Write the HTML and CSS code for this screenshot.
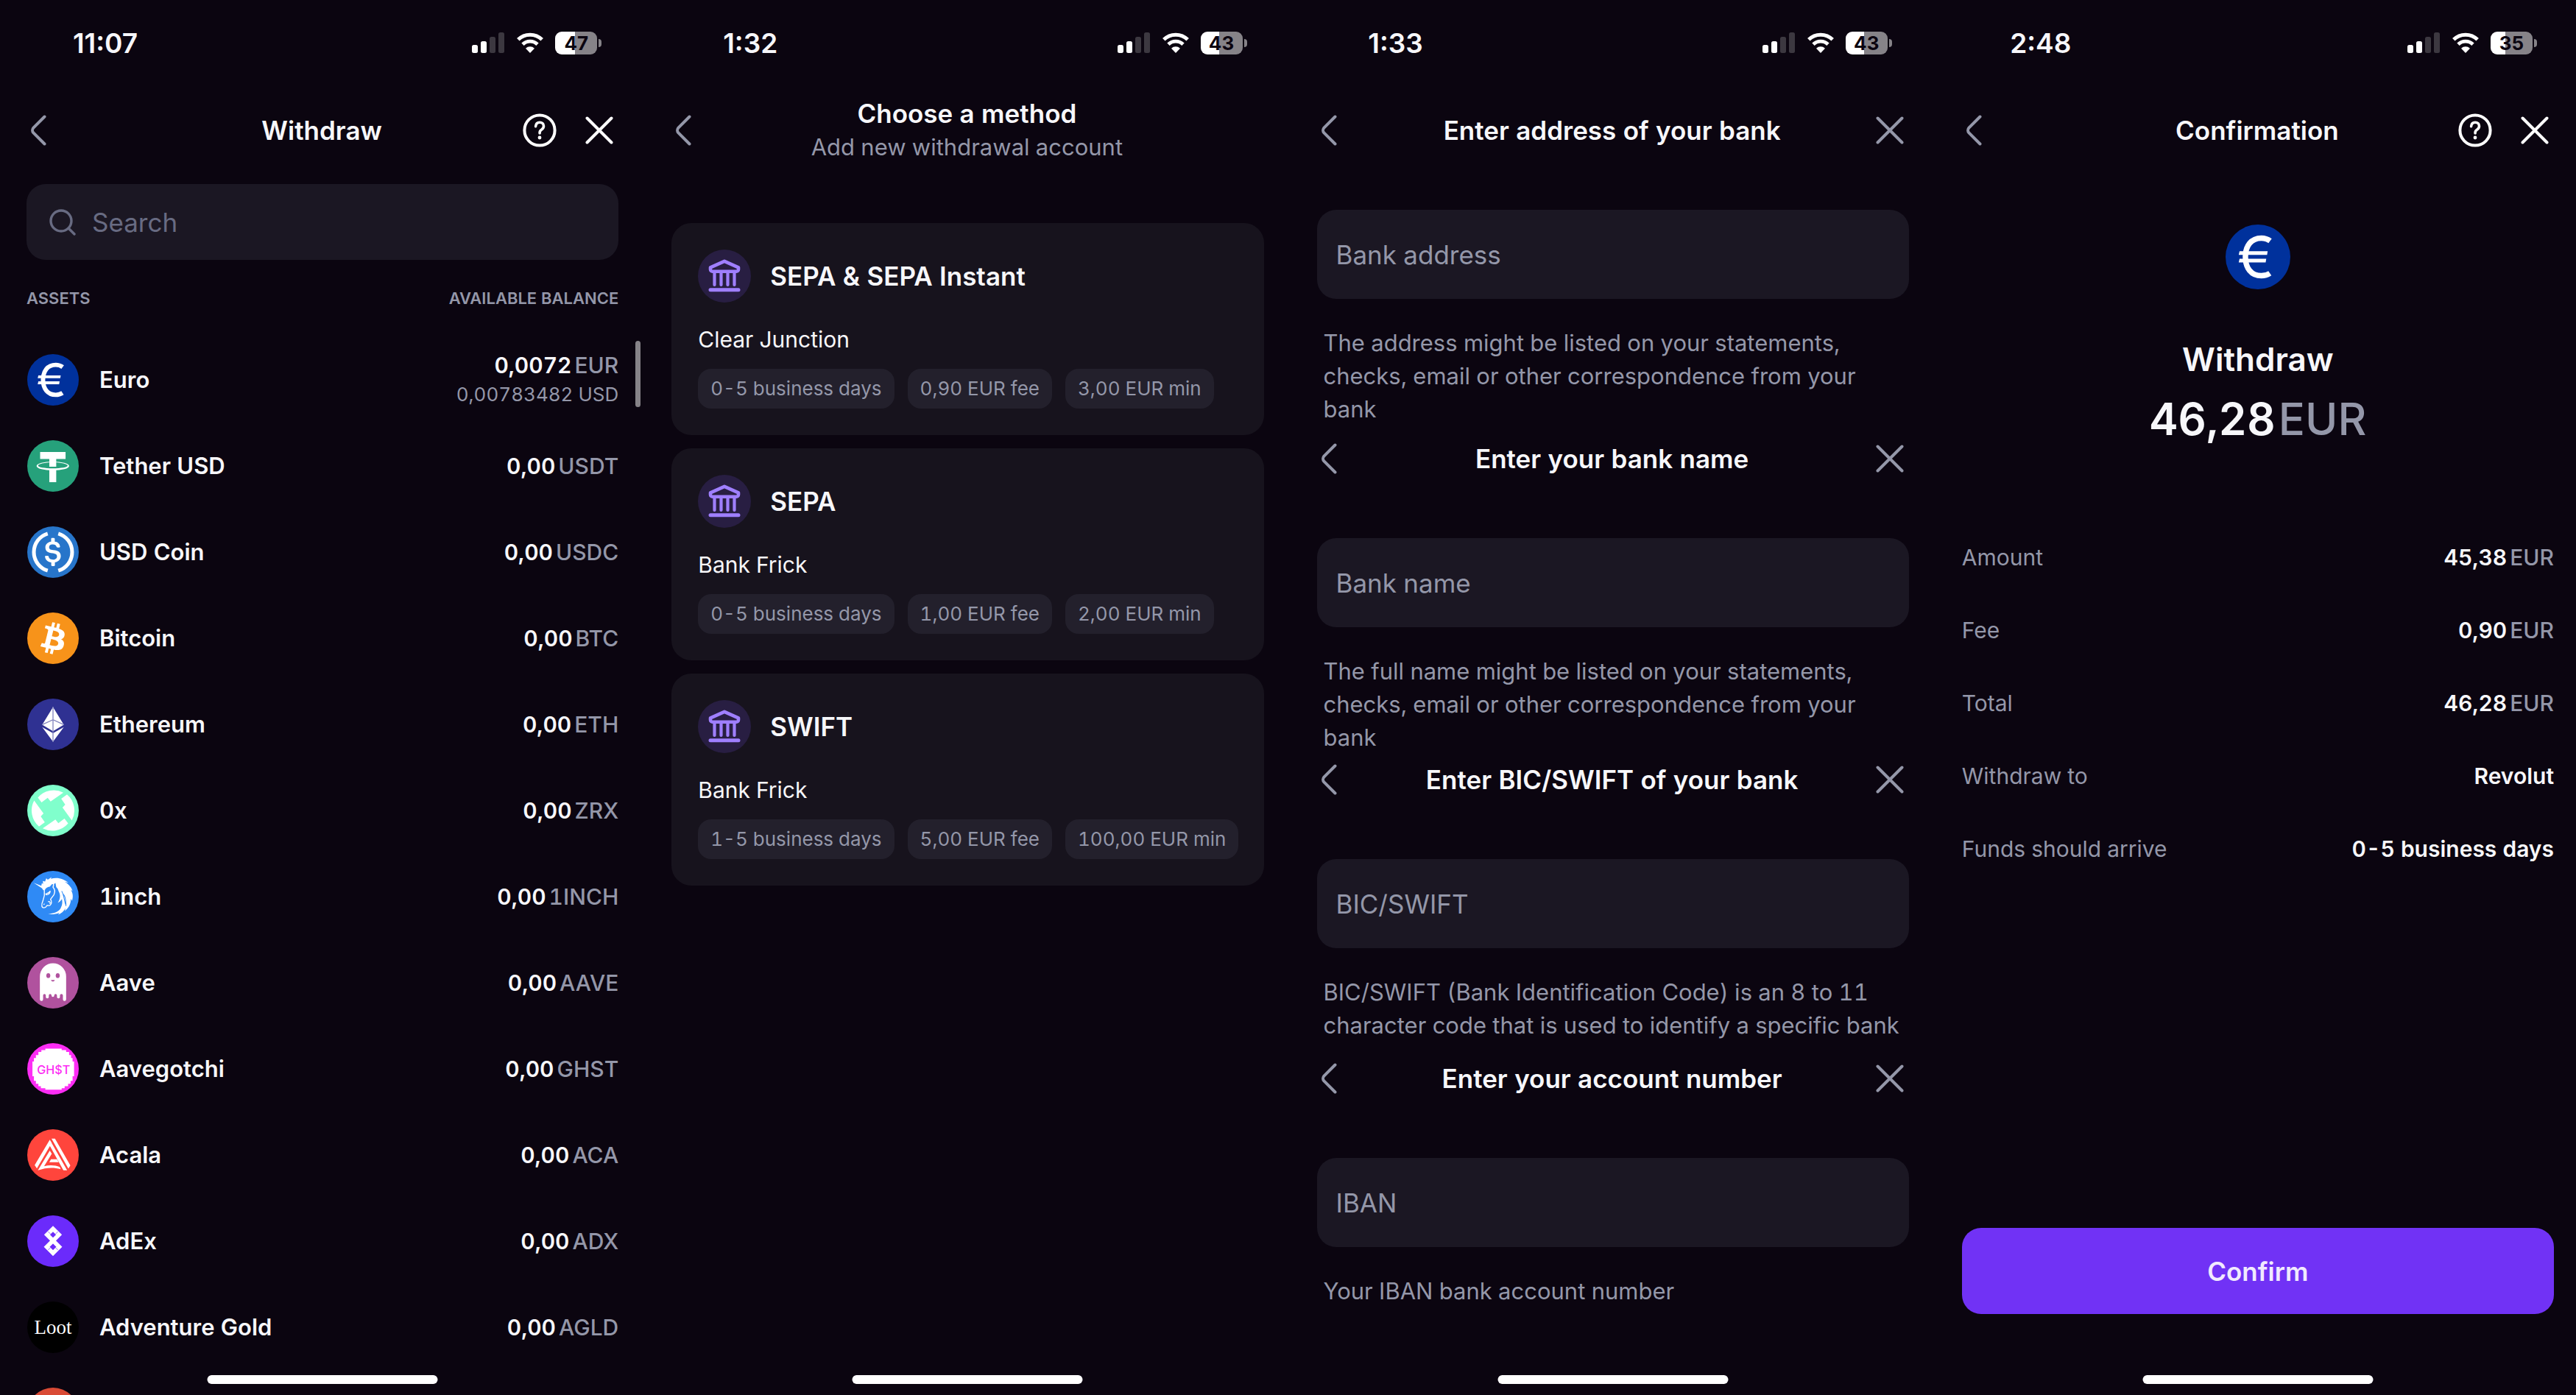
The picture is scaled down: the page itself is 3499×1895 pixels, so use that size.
FILE: index.html
```
<!DOCTYPE html>
<html lang="en">
  <head>
    <meta charset="UTF-8" />
    <meta name="viewport" content="width=device-width, initial-scale=1.0" />
    <title>Withdraw flow</title>
    <link rel="stylesheet" href="styles.css">
  </head>
  <body>
    <!-- shared icons -->
    <svg class="sprite" aria-hidden="true">
      <symbol id="i-back" viewBox="0 0 22 42">
        <path d="M19.5 2.5 4.4 17.6a5 5 0 0 0 0 6.8L19.5 39.5" fill="none" stroke="currentColor" stroke-width="4" stroke-linecap="round" />
      </symbol>
      <symbol id="i-close" viewBox="0 0 38 38">
        <path d="M2.5 2.5l33 33M35.5 2.5l-33 33" fill="none" stroke="currentColor" stroke-width="4" stroke-linecap="round" />
      </symbol>
      <symbol id="i-help" viewBox="0 0 46 46">
        <circle cx="23" cy="23" r="20.6" fill="none" stroke="currentColor" stroke-width="4" />
        <path d="M17.6 17.6c.3-3.3 2.5-5.3 5.5-5.3 3.2 0 5.400 2 5.400 4.900 0 2.200-1 3.500-2.800 4.700-1.900 1.200-2.600 2.200-2.600 4v1" fill="none" stroke="currentColor" stroke-width="3.6" stroke-linecap="round" />
        <circle cx="23" cy="33" r="2.4" fill="currentColor" />
      </symbol>
      <symbol id="i-search" viewBox="0 0 36 36">
        <circle cx="16" cy="16" r="14" fill="none" stroke="currentColor" stroke-width="3.4" />
        <path d="M26 26l8 8" stroke="currentColor" stroke-width="3.4" stroke-linecap="round" />
      </symbol>
      <symbol id="i-signal" viewBox="0 0 45 28">
        <rect y="17" width="8" height="11" rx="2.5" fill="#fff" />
        <rect x="12" y="12" width="8" height="16" rx="2.5" fill="#fff" />
        <rect x="24" y="6" width="8" height="22" rx="2.5" fill="#3c3840" />
        <rect x="36" width="8" height="28" rx="2.5" fill="#3c3840" />
      </symbol>
      <symbol id="i-wifi" viewBox="0 0 38 28">
        <path d="M2.8 9.8a23 23 0 0 1 32.4 0" fill="none" stroke="#fff" stroke-width="5" />
        <path d="M9 16.2a14.2 14.2 0 0 1 20 0" fill="none" stroke="#fff" stroke-width="4.8" />
        <path d="M19 28l-6-6.2a8.6 8.6 0 0 1 12 0z" fill="#fff" />
      </symbol>
      <symbol id="i-bank" viewBox="0 0 72 72">
        <path d="M17 24.3L36 15.8l19 8.5v2.7a2.8 2.8 0 0 1-2.8 2.8H19.8A2.8 2.8 0 0 1 17 27z" fill="none" stroke="#9f7fff" stroke-width="4.6" stroke-linejoin="round" />
        <path d="M22.5 31v17M31.5 31v17M40.5 31v17M49.5 31v17" stroke="#9f7fff" stroke-width="4.2" stroke-linecap="round" />
        <path d="M17 54.7h38" stroke="#9f7fff" stroke-width="5" stroke-linecap="round" />
      </symbol>
      <symbol id="c-eur" viewBox="0 0 32 32">
        <circle cx="16" cy="16" r="16" fill="#00319c" />
        <path d="M22 8.1c-1.2-.9-2.6-1.4-4.3-1.4-5.1 0-7.9 3.9-7.9 9.3s2.8 9.3 7.9 9.3c1.7 0 3-.4 4.2-1.2" fill="none" stroke="#fff" stroke-width="2.7" />
        <path d="M6.9 13.2h13.9l-.3 1.8H6.5zM6.9 16.9h13.2l-.3 1.8H6.5z" fill="#fff" />
      </symbol>
    </svg>

    <main class="board">
      <!-- asset list -->
      <section class="phone">
        <div class="status">
          <time>11:07</time>
          <div class="status-icons">
            <svg class="signal"><use href="#i-signal" /></svg>
            <svg class="wifi"><use href="#i-wifi" /></svg>
            <span class="battery" style="--level: 47%">47</span>
          </div>
        </div>
        <header class="nav">
          <button class="nav-back" aria-label="Back"><svg><use href="#i-back" /></svg></button>
          <h2>Withdraw</h2>
          <div class="nav-actions">
            <button class="help light" aria-label="Help"><svg><use href="#i-help" /></svg></button>
            <button class="close light" aria-label="Close"><svg><use href="#i-close" /></svg></button>
          </div>
        </header>

        <label class="search">
          <svg><use href="#i-search" /></svg>
          <input type="search" placeholder="Search" aria-label="Search" />
        </label>

        <div class="asset-list">
          <table class="assets">
            <thead>
              <tr><th>ASSETS</th><th>AVAILABLE BALANCE</th></tr>
            </thead>
            <tbody>
              <tr>
                <td><div class="asset"><svg class="coin"><use href="#c-eur" /></svg>Euro</div></td>
                <td><b>0,0072</b><i>EUR</i><small>0,00783482 USD</small></td>
              </tr>
              <tr>
                <td><div class="asset">
                  <svg class="coin" viewBox="0 0 32 32">
                    <circle cx="16" cy="16" r="16" fill="#26a17b" />
                    <path d="M8 7.3h15.8v4.3H18v4.9h-4.3v-4.9H8zM13.7 18h4.3v8h-4.3z" fill="#fff" />
                    <path fill-rule="evenodd" d="M5.8 16a10.1 2.8 0 0 1 20.2 0 10.1 2.8 0 0 1-20.2 0zM6.7 15.8c0 1 4 1.7 9.2 1.7s9.2-.7 9.2-1.7-4-2.1-9.2-2.1-9.2 1.1-9.2 2.1z" fill="#fff" />
                  </svg>Tether USD</div></td>
                <td><b>0,00</b><i>USDT</i></td>
              </tr>
              <tr>
                <td><div class="asset">
                  <svg class="coin" viewBox="0 0 32 32">
                    <circle cx="16" cy="16" r="16" fill="#2775ca" />
                    <path d="M12.7 4.5a12 12 0 0 0 0 23M19.3 4.5a12 12 0 0 1 0 23" fill="none" stroke="#fff" stroke-width="2.3" />
                    <path transform="translate(-3.2 -3.2) scale(1.2)" d="M20.022 18.124c0-2.124-1.28-2.852-3.84-3.156-1.828-.243-2.193-.728-2.193-1.578 0-.85.61-1.396 1.828-1.396 1.097 0 1.707.364 2.011 1.275a.458.458 0 00.427.303h.975a.416.416 0 00.427-.425v-.06a3.04 3.04 0 00-2.743-2.489V9.142c0-.243-.183-.425-.487-.486h-.915c-.243 0-.426.182-.487.486v1.396c-1.829.242-2.986 1.456-2.986 2.974 0 2.002 1.218 2.791 3.778 3.095 1.707.303 2.255.668 2.255 1.639 0 .97-.853 1.638-2.011 1.638-1.585 0-2.133-.667-2.316-1.578-.06-.242-.244-.364-.427-.364h-1.036a.416.416 0 00-.426.425v.06c.243 1.518 1.219 2.61 3.23 2.914v1.457c0 .242.183.425.487.485h.915c.243 0 .426-.182.487-.485V21.34c1.829-.303 3.047-1.578 3.047-3.217z" fill="#fff" />
                  </svg>USD Coin</div></td>
                <td><b>0,00</b><i>USDC</i></td>
              </tr>
              <tr>
                <td><div class="asset">
                  <svg class="coin" viewBox="0 0 32 32">
                    <circle cx="16" cy="16" r="16" fill="#f7931a" />
                    <path d="M23.189 14.02c.314-2.096-1.283-3.223-3.465-3.975l.708-2.84-1.728-.43-.69 2.765c-.454-.114-.92-.22-1.385-.326l.695-2.783L15.596 6l-.708 2.839c-.376-.086-.746-.17-1.104-.26l.002-.009-2.384-.595-.46 1.846s1.283.294 1.256.312c.7.175.826.638.805 1.006l-.806 3.235c.048.012.11.03.18.057l-.183-.045-1.13 4.532c-.086.212-.303.531-.793.41.018.025-1.256-.313-1.256-.313l-.858 1.978 2.25.561c.418.105.828.215 1.231.318l-.715 2.872 1.727.43.708-2.84c.472.127.93.245 1.378.357l-.706 2.828 1.728.43.715-2.866c2.948.558 5.164.333 6.097-2.333.752-2.146-.037-3.385-1.588-4.192 1.13-.26 1.98-1.003 2.207-2.538zm-3.95 5.538c-.533 2.147-4.148.986-5.32.695l.95-3.805c1.172.293 4.929.872 4.37 3.11zm.535-5.569c-.487 1.953-3.495.96-4.47.717l.86-3.45c.975.243 4.118.696 3.61 2.733z" fill="#fff" />
                  </svg>Bitcoin</div></td>
                <td><b>0,00</b><i>BTC</i></td>
              </tr>
              <tr>
                <td><div class="asset">
                  <svg class="coin" viewBox="0 0 32 32">
                    <circle cx="16" cy="16" r="16" fill="#2f3192" />
                    <path d="M16 5.2l6.7 11L16 20.2l-6.7-4zM9.3 17.7L16 21.5l6.7-3.8L16 26.7z" fill="#fff" />
                    <path d="M9.3 16.2L16 13.1l6.7 3.1M16 5v22" fill="none" stroke="#8284be" stroke-width=".6" />
                  </svg>Ethereum</div></td>
                <td><b>0,00</b><i>ETH</i></td>
              </tr>
              <tr>
                <td><div class="asset">
                  <svg class="coin" viewBox="0 0 32 32">
                    <circle cx="16" cy="16" r="16" fill="#80ffcc" />
                    <g fill="#fff">
                      <path d="M6.6 8l2.3 3 3.8-2.9 1.8 2.3 7.9-5.5A13 13 0 0 0 6.6 8zM24.7 6.1a13 13 0 0 1 3 16.1l-5.8-8 1.7-1.9-2.5-3.6z" />
                      <path transform="rotate(180 16 16)" d="M6.6 8l2.3 3 3.8-2.9 1.8 2.3 7.9-5.5A13 13 0 0 0 6.6 8zM24.7 6.1a13 13 0 0 1 3 16.1l-5.8-8 1.7-1.9-2.5-3.6z" />
                    </g>
                  </svg>0x</div></td>
                <td><b>0,00</b><i>ZRX</i></td>
              </tr>
              <tr>
                <td><div class="asset">
                  <svg class="coin" viewBox="52 426 208 208">
                    <circle cx="156" cy="530" r="104" fill="#2f8af5" />
                    <path d="M78 474l40 16 2 12z" fill="#fff" />
                    <path d="M108 490l3-14 5 3-1-12 9 2 5-13 6 6 15-11-3 7c28-8 52 0 71 16l-15-4c20 12 30 28 32 38l-7-6c10 18 9 30 5 45l-5-8c0 24-11 38-24 49l2-11c-8 15-18 21-29 26l4-8c-15 6-30 8-45 5 22-2 41-8 50-22 9-15 8-27 6-38-5 8-10 12-17 15 11-16 12-32 4-46-2-8-5-14-10-18l-3-16c-6 2-8 7-10 12-9-4-18 0-24 10l-15 8z" fill="#fff" />
                    <path d="M191 508c10 16 10 40 18 60M197 520c14 14 8 30 12 42" fill="none" stroke="#2f8af5" stroke-width="3" />
                    <path d="M121 503c4-9 12-14 21-15l14-16c3 9 3 15 0 20 8 8 8 20 4 30l-14 19c6 7 5 18-2 24-6 4-11-3-14 3-4 9-18 10-19 0-1-7 1-14 4-20l6-22z" fill="#2f8af5" stroke="#fff" stroke-width="4" stroke-linejoin="round" />
                    <path d="M125 520c8-4 14-4 20-13-1 10-8 16-18 16M136 551c6-4 11 2 7 8M118 562l4-3" fill="none" stroke="#fff" stroke-width="4" />
                  </svg>1inch</div></td>
                <td><b>0,00</b><i>1INCH</i></td>
              </tr>
              <tr>
                <td><div class="asset">
                  <svg class="coin" viewBox="52 777 208 208">
                    <circle cx="156" cy="881" r="104" fill="#b0529e" />
                    <path d="M103 855a53 53 0 0 1 106 0v93a6.5 6.5 0 0 1-13 0v-16c0-8-12-8-12 0v6a6 6 0 0 1-12 0v-6c0-8-11-8-11 0a5.5 6 0 0 1-11 0c0-8-11-8-11 0v6a6 6 0 0 1-12 0v-6c0-8-11-8-11 0v16a6.5 6.5 0 0 1-13 0z" fill="#fff" />
                    <g fill="#b0529e"><ellipse cx="137" cy="852" rx="8" ry="10" /><ellipse cx="175" cy="852" rx="8" ry="10" /><path d="M148 870h15c-2 8-13 8-15 0z" /></g>
                  </svg>Aave</div></td>
                <td><b>0,00</b><i>AAVE</i></td>
              </tr>
              <tr>
                <td><div class="asset">
                  <svg class="coin" viewBox="52 1128 208 208">
                    <circle cx="156" cy="1232" r="104" fill="#fc2df4" />
                    <path d="M125 1150h66v6h18v8h12v12h8v12h6v14h6v60h-6v18h-8v12h-10v10h-14v8h-12v6h-66v-6h-18v-8h-10v-10h-10v-12h-8v-18h-6v-60h6v-14h8v-12h10v-12h12v-8h16z" fill="#fff" />
                    <text x="158" y="1254" class="mark-ghst">GH$T</text>
                  </svg>Aavegotchi</div></td>
                <td><b>0,00</b><i>GHST</i></td>
              </tr>
              <tr>
                <td><div class="asset">
                  <svg class="coin" viewBox="52 98 208 208">
                    <circle cx="156" cy="202" r="104" fill="#ff453c" />
                    <g fill="#fff">
                      <path d="M143 140l8 13-60 103-9-13zM143 140l70 124h-15l-61-110zM150 136h14l62 108-8 13z" />
                      <path d="M143 184l8 13-31 50c22-6 46-4 63 3l4 9c-30-8-60-6-92 5zM148 219h24l7 12h-38z" />
                    </g>
                  </svg>Acala</div></td>
                <td><b>0,00</b><i>ACA</i></td>
              </tr>
              <tr>
                <td><div class="asset">
                  <svg class="coin" viewBox="52 450 208 208">
                    <circle cx="156" cy="554" r="104" fill="#6b2bfb" />
                    <path d="M156 504l24 24-49 49 25 25 25-25-49-49z" fill="none" stroke="#fff" stroke-width="17" />
                    <path d="M136 515l10 10M176 515l-10 10M136 590l10-10M176 590l-10-10" stroke="#6b2bfb" stroke-width="2" />
                  </svg>AdEx</div></td>
                <td><b>0,00</b><i>ADX</i></td>
              </tr>
              <tr>
                <td><div class="asset">
                  <svg class="coin" viewBox="52 800 208 208">
                    <circle cx="156" cy="904" r="104" fill="#000" />
                    <text x="156" y="932" class="mark-loot">Loot</text>
                  </svg>Adventure Gold</div></td>
                <td><b>0,00</b><i>AGLD</i></td>
              </tr>
              <tr>
                <td><div class="asset">
                  <svg class="coin" viewBox="0 0 32 32">
                    <circle cx="16" cy="16" r="16" fill="#d94a35" />
                    <path d="M12 5h8v2h-8z" fill="#eeb0a6" />
                  </svg></div></td>
                <td></td>
              </tr>
            </tbody>
          </table>
          <span class="scroll-thumb"></span>
        </div>
        <span class="home-bar"></span>
      </section>

      <!-- withdrawal method -->
      <section class="phone">
        <div class="status">
          <time>1:32</time>
          <div class="status-icons">
            <svg class="signal"><use href="#i-signal" /></svg>
            <svg class="wifi"><use href="#i-wifi" /></svg>
            <span class="battery" style="--level: 43%">43</span>
          </div>
        </div>
        <header class="nav">
          <button class="nav-back" aria-label="Back"><svg><use href="#i-back" /></svg></button>
          <div>
            <h2>Choose a method</h2>
            <p>Add new withdrawal account</p>
          </div>
        </header>
        <div class="methods">
          <article class="card">
            <h3><svg><use href="#i-bank" /></svg>SEPA &amp; SEPA Instant</h3>
            <p>Clear Junction</p>
            <ul><li>0-5 business days</li><li>0,90 EUR fee</li><li>3,00 EUR min</li></ul>
          </article>
          <article class="card">
            <h3><svg><use href="#i-bank" /></svg>SEPA</h3>
            <p>Bank Frick</p>
            <ul><li>0-5 business days</li><li>1,00 EUR fee</li><li>2,00 EUR min</li></ul>
          </article>
          <article class="card">
            <h3><svg><use href="#i-bank" /></svg>SWIFT</h3>
            <p>Bank Frick</p>
            <ul><li>1-5 business days</li><li>5,00 EUR fee</li><li>100,00 EUR min</li></ul>
          </article>
        </div>
        <span class="home-bar"></span>
      </section>

      <!-- bank details -->
      <section class="phone">
        <div class="status">
          <time>1:33</time>
          <div class="status-icons">
            <svg class="signal"><use href="#i-signal" /></svg>
            <svg class="wifi"><use href="#i-wifi" /></svg>
            <span class="battery" style="--level: 43%">43</span>
          </div>
        </div>
        <form class="steps">
          <div class="step">
            <header class="nav">
              <button type="button" class="nav-back" aria-label="Back"><svg><use href="#i-back" /></svg></button>
              <h2><label for="address">Enter address of your bank</label></h2>
              <div class="nav-actions"><button type="button" class="close" aria-label="Close"><svg><use href="#i-close" /></svg></button></div>
            </header>
            <input id="address" type="text" placeholder="Bank address" />
            <p>The address might be listed on your statements, checks, email or other correspondence from your bank</p>
          </div>
          <div class="step">
            <header class="nav">
              <button type="button" class="nav-back" aria-label="Back"><svg><use href="#i-back" /></svg></button>
              <h2><label for="bank">Enter your bank name</label></h2>
              <div class="nav-actions"><button type="button" class="close" aria-label="Close"><svg><use href="#i-close" /></svg></button></div>
            </header>
            <input id="bank" type="text" placeholder="Bank name" />
            <p>The full name might be listed on your statements, checks, email or other correspondence from your bank</p>
          </div>
          <div class="step">
            <header class="nav">
              <button type="button" class="nav-back" aria-label="Back"><svg><use href="#i-back" /></svg></button>
              <h2><label for="bic">Enter BIC/SWIFT of your bank</label></h2>
              <div class="nav-actions"><button type="button" class="close" aria-label="Close"><svg><use href="#i-close" /></svg></button></div>
            </header>
            <input id="bic" type="text" placeholder="BIC/SWIFT" />
            <p>BIC/SWIFT (Bank Identification Code) is an 8 to 11 character code that is used to identify a specific bank</p>
          </div>
          <div class="step">
            <header class="nav">
              <button type="button" class="nav-back" aria-label="Back"><svg><use href="#i-back" /></svg></button>
              <h2><label for="iban">Enter your account number</label></h2>
              <div class="nav-actions"><button type="button" class="close" aria-label="Close"><svg><use href="#i-close" /></svg></button></div>
            </header>
            <input id="iban" type="text" placeholder="IBAN" />
            <p>Your IBAN bank account number</p>
          </div>
        </form>
        <span class="home-bar"></span>
      </section>

      <!-- confirmation -->
      <section class="phone">
        <div class="status">
          <time>2:48</time>
          <div class="status-icons">
            <svg class="signal"><use href="#i-signal" /></svg>
            <svg class="wifi"><use href="#i-wifi" /></svg>
            <span class="battery" style="--level: 35%">35</span>
          </div>
        </div>
        <header class="nav">
          <button class="nav-back" aria-label="Back"><svg><use href="#i-back" /></svg></button>
          <h2>Confirmation</h2>
          <div class="nav-actions">
            <button class="help light" aria-label="Help"><svg><use href="#i-help" /></svg></button>
            <button class="close light" aria-label="Close"><svg><use href="#i-close" /></svg></button>
          </div>
        </header>
        <div class="summary">
          <svg><use href="#c-eur" /></svg>
          <h3>Withdraw</h3>
          <p><b>46,28</b><i>EUR</i></p>
        </div>
        <dl class="details">
          <div><dt>Amount</dt><dd>45,38<i>EUR</i></dd></div>
          <div><dt>Fee</dt><dd>0,90<i>EUR</i></dd></div>
          <div><dt>Total</dt><dd>46,28<i>EUR</i></dd></div>
          <div><dt>Withdraw to</dt><dd>Revolut</dd></div>
          <div><dt>Funds should arrive</dt><dd>0-5 business days</dd></div>
        </dl>
        <button class="confirm">Confirm</button>
        <span class="home-bar"></span>
      </section>
    </main>
  </body>
</html>
```
FILE: styles.css
```
* {
  box-sizing: border-box;
  margin: 0;
  padding: 0;
}

:root {
  --bg: #0b0510;
  --card: #17131d;
  --field: #1b1723;
  --chip: #23202c;
  --text: #f7f7fa;
  --muted: #9497a9;
  --dim: #686b82;
}

body {
  background: var(--bg);
  color: var(--text);
  font-family: Inter, sans-serif;
  font-size: 31px;
  font-variant-numeric: tabular-nums;
  overflow: hidden;
}

button {
  background: none;
  border: none;
  color: inherit;
  font: inherit;
  cursor: pointer;
}

svg {
  display: block;
  flex: none;
}

i {
  margin-left: 4px;
  font-style: normal;
  color: var(--muted);
}

.sprite {
  position: absolute;
  width: 0;
  height: 0;
}

/* four screens side by side, the last one runs slightly past the edge */
.board {
  display: grid;
  grid-template-columns: repeat(4, 1fr);
  width: calc(100% + 6px);
  height: 100vh;
}

.phone {
  position: relative;
  display: flex;
  flex-direction: column;
  min-width: 0;
  min-height: 0;
  padding: 0 36px;
  overflow: hidden;
}

/* status bar */
.status {
  display: flex;
  flex: none;
  align-items: center;
  justify-content: space-between;
  height: 116px;
  margin-bottom: 26px;
  padding: 0 23px 0 32px;
}

.status time {
  width: 150px;
  text-align: center;
  font-size: 37px;
  font-weight: 600;
  font-variant-numeric: normal;
}

.status-icons {
  display: flex;
  align-items: center;
  gap: 15px;
}

.signal {
  width: 45px;
  height: 28px;
}

.wifi {
  width: 38px;
  height: 28px;
}

.battery {
  position: relative;
  width: 57px;
  height: 31px;
  margin-right: 6px;
  border-radius: 9px;
  background: linear-gradient(to right, #fff var(--level), #868388 var(--level));
  color: var(--bg);
  font-size: 26px;
  font-weight: 700;
  font-variant-numeric: normal;
  line-height: 31px;
  text-align: center;
}

.battery::after {
  content: "";
  position: absolute;
  right: -6px;
  top: 10px;
  width: 4px;
  height: 11px;
  border-radius: 0 4px 4px 0;
  background: #868388;
}

/* screen title */
.nav {
  display: grid;
  flex: none;
  grid-template-columns: 1fr auto 1fr;
  align-content: center;
  align-items: center;
  height: 70px;
  padding: 0 7px 0 5px;
  text-align: center;
}

.nav h2 {
  font-size: 35px;
  font-weight: 600;
  line-height: 45px;
}

.nav p {
  color: var(--muted);
  line-height: 45px;
}

.nav-back,
.close {
  color: var(--muted);
}

.nav-back {
  justify-self: start;
}

.nav-back svg {
  width: 22px;
  height: 42px;
}

.nav-actions {
  display: flex;
  align-items: center;
  justify-content: flex-end;
  gap: 39px;
}

.help svg {
  width: 46px;
  height: 46px;
}

.close svg {
  width: 38px;
  height: 38px;
}

.light {
  color: #fff;
}

/* search */
.search {
  display: flex;
  flex: none;
  align-items: center;
  gap: 22px;
  height: 103px;
  margin: 38px 0;
  padding: 0 31px;
  border-radius: 26px;
  background: var(--field);
  color: var(--dim);
}

.search svg {
  width: 36px;
  height: 36px;
}

input {
  width: 100%;
  border: none;
  outline: none;
  background: none;
  color: var(--text);
  font: inherit;
  font-size: 35px;
}

.search input::placeholder {
  color: var(--dim);
}

/* assets */
.asset-list {
  flex: 1;
  min-height: 0;
}

.assets {
  width: 100%;
  border-collapse: collapse;
}

.assets th {
  height: 66px;
  padding-bottom: 38px;
  color: var(--muted);
  font-size: 22px;
  font-weight: 600;
  line-height: 28px;
  text-align: left;
}

.assets td {
  height: 117px;
  font-weight: 600;
}

.assets th:last-child,
.assets td:last-child {
  text-align: right;
}

.assets b,
.assets i {
  font-size: 30px;
  line-height: 40px;
}

.assets b {
  font-weight: 600;
}

.assets i {
  font-weight: 500;
}

.assets small {
  display: block;
  color: var(--muted);
  font-size: 26px;
  font-weight: 400;
  line-height: 40px;
}

.asset {
  display: flex;
  align-items: center;
  gap: 28px;
  padding-left: 1px;
}

.coin {
  width: 70px;
  height: 70px;
}

.mark-ghst {
  fill: #fc2df4;
  font-size: 48px;
  font-weight: 500;
  text-anchor: middle;
}

.mark-loot {
  fill: #fff;
  font-family: "Liberation Serif", serif;
  font-size: 80px;
  font-weight: 400;
  text-anchor: middle;
}

.scroll-thumb {
  position: absolute;
  right: 6px;
  top: 463px;
  width: 7px;
  height: 90px;
  border-radius: 4px;
  background: #868388;
}

/* methods */
.methods {
  display: flex;
  flex-direction: column;
  gap: 18px;
  margin-top: 91px;
}

.card {
  padding: 36px;
  border-radius: 27px;
  background: var(--card);
}

.card h3 {
  display: flex;
  align-items: center;
  gap: 26px;
  font-size: 35px;
  font-weight: 600;
}

.card svg {
  width: 72px;
  height: 72px;
  border-radius: 50%;
  background: #281e42;
}

.card p {
  margin: 30px 0 20px;
  font-size: 30px;
  line-height: 40px;
}

.card ul {
  display: flex;
  gap: 18px;
  list-style: none;
}

.card li {
  padding: 0 17px;
  border-radius: 18px;
  background: var(--chip);
  color: var(--muted);
  font-size: 26px;
  line-height: 54px;
  white-space: nowrap;
}

/* bank details */
.steps {
  display: grid;
  grid-template-rows: 446px 436px 406px auto;
}

.step input {
  height: 121px;
  margin: 73px 0 37px;
  padding: 0 26px;
  border-radius: 26px;
  background: var(--field);
}

.step input::placeholder {
  color: var(--muted);
}

.step p {
  padding: 0 0 0 9px;
  color: var(--muted);
  line-height: 45px;
}

/* confirmation */
.summary {
  display: flex;
  flex-direction: column;
  align-items: center;
  margin: 93px 0 103px;
}

.summary svg {
  width: 88px;
  height: 88px;
}

.summary h3 {
  margin: 68px 0 18px;
  font-size: 44px;
  font-weight: 600;
  line-height: 54px;
}

.summary p {
  display: flex;
  font-size: 60px;
  font-weight: 500;
  line-height: 72px;
}

.summary b {
  font-weight: 600;
}

.details {
  font-size: 30px;
}

.details div {
  display: flex;
  justify-content: space-between;
  line-height: 99px;
}

.details dt {
  color: var(--muted);
}

.details dd {
  font-weight: 600;
}

.details i {
  font-weight: 500;
}

.confirm {
  flex: none;
  height: 117px;
  margin: auto 0 110px;
  border-radius: 26px;
  background: #7132f5;
  color: #f1eafe;
  font-size: 35px;
  font-weight: 600;
}

.home-bar {
  position: absolute;
  bottom: 15px;
  left: 50%;
  width: 313px;
  height: 12px;
  border-radius: 6px;
  background: #fff;
  transform: translateX(-50%);
}
```
